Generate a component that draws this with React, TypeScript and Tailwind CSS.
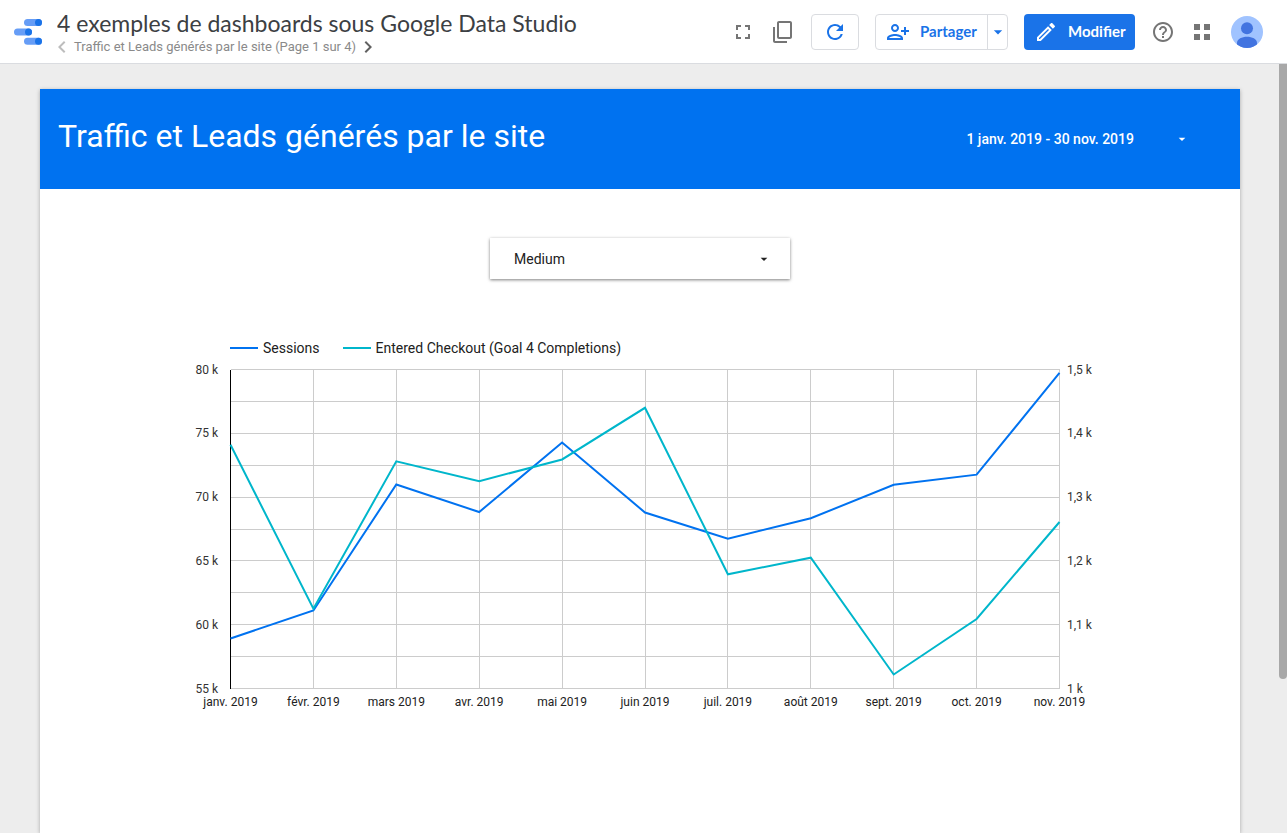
import {
  MdArrowDropDown,
  MdChevronLeft,
  MdChevronRight,
  MdContentCopy,
  MdFullscreen,
  MdHelpOutline,
  MdOutlineEdit,
  MdOutlinePersonAddAlt1,
  MdRefresh,
} from 'react-icons/md';

const months = [
  { label: 'janv. 2019', sessions: 58.92, checkout: 1382 },
  { label: 'févr. 2019', sessions: 61.11, checkout: 1125 },
  { label: 'mars 2019', sessions: 70.99, checkout: 1356 },
  { label: 'avr. 2019', sessions: 68.83, checkout: 1325 },
  { label: 'mai 2019', sessions: 74.28, checkout: 1359 },
  { label: 'juin 2019', sessions: 68.79, checkout: 1440 },
  { label: 'juil. 2019', sessions: 66.74, checkout: 1179 },
  { label: 'août 2019', sessions: 68.34, checkout: 1205 },
  { label: 'sept. 2019', sessions: 70.97, checkout: 1022 },
  { label: 'oct. 2019', sessions: 71.76, checkout: 1109 },
  { label: 'nov. 2019', sessions: 79.73, checkout: 1261 },
];

const leftTicks = ['80 k', '75 k', '70 k', '65 k', '60 k', '55 k'];
const rightTicks = ['1,5 k', '1,4 k', '1,3 k', '1,2 k', '1,1 k', '1 k'];

const series = [
  { name: 'Sessions', swatch: 'bg-[#0072f0]' },
  { name: 'Entered Checkout (Goal 4 Completions)', swatch: 'bg-[#00b6cb]' },
];

// Plot area inside the chart's viewBox
const plot = { left: 50.5, top: 9.5, width: 829, height: 319 };

const xAt = (i: number) => plot.left + (plot.width / (months.length - 1)) * i;
const yAt = (ratio: number) => plot.top + plot.height * (1 - ratio);

function Logo() {
  return (
    <svg width="28" height="26" viewBox="0 0 28 26" className="shrink-0" aria-hidden="true">
      <g fill="#669df6">
        <rect x="10" y="0" width="18" height="7" rx="3.5" />
        <rect x="0" y="9.4" width="18" height="7" rx="3.5" />
        <rect x="10" y="18.8" width="18" height="7" rx="3.5" />
      </g>
      <g fill="#1a73e8">
        <circle cx="24.5" cy="3.5" r="3.5" />
        <circle cx="14.5" cy="12.9" r="3.5" />
        <circle cx="24.5" cy="22.3" r="3.5" />
      </g>
    </svg>
  );
}

function Avatar() {
  return (
    <svg width="32" height="32" viewBox="0 0 32 32" aria-hidden="true">
      <clipPath id="avatar-clip">
        <circle cx="16" cy="16" r="16" />
      </clipPath>
      <g clipPath="url(#avatar-clip)">
        <rect width="32" height="32" fill="#a0c3ff" />
        <circle cx="16" cy="12.3" r="6" fill="#4274e0" />
        <path d="M6 32v-5c0-4 5-6.2 10-6.2s10 2.2 10 6.2v5z" fill="#4274e0" />
      </g>
    </svg>
  );
}

function Header() {
  return (
    <header className="flex h-16 shrink-0 items-center border-b border-[#dadce0] bg-white pl-[14px] pr-6">
      <Logo />
      <div className="ml-[15px] min-w-0 flex-1 pt-0.5">
        <h1 className="truncate font-['Lato',sans-serif] text-[23px] leading-7 text-[#3c4043]">
          4 exemples de dashboards sous Google Data Studio
        </h1>
        <nav className="-ml-[7px] flex h-5 items-center text-[13px] text-[#8a8a8a]">
          <button aria-label="Page précédente" className="text-[#bdbdbd]">
            <MdChevronLeft size={24} />
          </button>
          <span className="whitespace-nowrap">Traffic et Leads générés par le site (Page 1 sur 4)</span>
          <button aria-label="Page suivante" className="text-[#616161]">
            <MdChevronRight size={24} />
          </button>
        </nav>
      </div>

      <div className="flex shrink-0 items-center text-[#757575]">
        <button aria-label="Plein écran">
          <MdFullscreen size={24} />
        </button>
        <button aria-label="Copier le rapport" className="ml-4">
          <MdContentCopy size={24} className="-scale-y-100" />
        </button>
        <button
          aria-label="Actualiser"
          className="ml-4 flex h-9 w-12 items-center justify-center rounded border border-[#dadce0] text-[#1a73e8]"
        >
          <MdRefresh size={24} />
        </button>
        <div className="ml-4 flex h-9 rounded border border-[#dadce0] font-['Lato',sans-serif] text-[15px] font-bold text-[#1a73e8]">
          <button className="flex w-[111px] items-center gap-2.5 pl-2.5">
            <MdOutlinePersonAddAlt1 size={24} />
            Partager
          </button>
          <button
            aria-label="Autres options de partage"
            className="flex w-5 items-center justify-center border-l border-[#dadce0]"
          >
            <MdArrowDropDown size={20} className="shrink-0" />
          </button>
        </div>
        <button className="ml-4 flex h-9 w-[111px] items-center gap-2.5 rounded bg-[#1a73e8] pl-2.5 font-['Lato',sans-serif] text-[15px] font-bold text-white">
          <MdOutlineEdit size={24} />
          Modifier
        </button>
        <button aria-label="Aide" className="ml-4">
          <MdHelpOutline size={24} />
        </button>
        <button aria-label="Applications" className="ml-[19px]">
          <svg width="16" height="16" viewBox="0 0 16 16" fill="currentColor">
            <path d="M0 0h6v6H0zM10 0h6v6h-6zM0 10h6v6H0zM10 10h6v6h-6z" />
          </svg>
        </button>
        <button aria-label="Compte" className="ml-[21px]">
          <Avatar />
        </button>
      </div>
    </header>
  );
}

function TrafficChart() {
  const sessions = months.map((m, i) => `${xAt(i)},${yAt((m.sessions - 55) / 25)}`).join(' ');
  const checkout = months.map((m, i) => `${xAt(i)},${yAt((m.checkout - 1000) / 500)}`).join(' ');

  return (
    <figure className="mx-auto w-[920px] max-w-full">
      <figcaption className="flex h-6 items-center gap-[23px] pl-[50px] text-sm text-[#212121]">
        {series.map((s) => (
          <span key={s.name} className="flex items-center gap-[5px]">
            <span className={`h-0.5 w-7 ${s.swatch}`} />
            {s.name}
          </span>
        ))}
      </figcaption>
      <svg viewBox="0 0 920 352" className="block w-full text-xs" role="img" aria-label="Sessions et Entered Checkout par mois">
        <g stroke="#cccccc" shapeRendering="crispEdges">
          {Array.from({ length: 11 }, (_, i) => (
            <line key={i} x1={plot.left} x2={plot.left + plot.width} y1={yAt(i / 10)} y2={yAt(i / 10)} />
          ))}
          {months.map((m, i) => (
            <line key={m.label} x1={xAt(i)} x2={xAt(i)} y1={plot.top} y2={plot.top + plot.height} />
          ))}
        </g>
        <line
          x1={plot.left}
          x2={plot.left}
          y1={plot.top}
          y2={plot.top + plot.height}
          stroke="#000000"
          shapeRendering="crispEdges"
        />
        <polyline points={sessions} fill="none" stroke="#0072f0" strokeWidth="2" />
        <polyline points={checkout} fill="none" stroke="#00b6cb" strokeWidth="2" />
        <g fill="#333333" textAnchor="end">
          {leftTicks.map((t, i) => (
            <text key={t} x="38" y={yAt(1 - i / 5) + 4}>{t}</text>
          ))}
        </g>
        <g fill="#333333">
          {rightTicks.map((t, i) => (
            <text key={t} x="887" y={yAt(1 - i / 5) + 4}>{t}</text>
          ))}
        </g>
        <g fill="#212121" textAnchor="middle">
          {months.map((m, i) => (
            <text key={m.label} x={xAt(i)} y="346">{m.label}</text>
          ))}
        </g>
      </svg>
    </figure>
  );
}

export default function App() {
  return (
    <div className="flex h-screen flex-col overflow-hidden bg-[#ededed] font-['Roboto',sans-serif]">
      <Header />
      <div className="flex min-h-0 flex-1">
        <main className="flex min-w-0 flex-1 flex-col pl-10 pr-[39px] pt-[25px]">
          <article className="flex-1 bg-white shadow-[0_1px_4px_rgba(0,0,0,0.3)]">
            <div className="flex h-[100px] items-center justify-between bg-[#0072f0] pl-[18px] pr-[50px] text-white">
              <h2 className="pb-1.5 text-[32px]">Traffic et Leads générés par le site</h2>
              <button className="flex items-center gap-10 text-sm font-medium">
                1 janv. 2019 - 30 nov. 2019
                <MdArrowDropDown size={16} />
              </button>
            </div>

            <div className="relative mx-auto mt-[49px] w-[300px] shadow-[0_1px_3px_rgba(0,0,0,0.5)]">
              <select
                aria-label="Medium"
                className="h-[41px] w-full appearance-none bg-white px-6 text-sm text-[#212121] outline-none"
              >
                <option>Medium</option>
              </select>
              <MdArrowDropDown
                size={16}
                className="pointer-events-none absolute right-[18px] top-[13px] text-[#212121]"
              />
            </div>

            <div className="mt-[57px]">
              <TrafficChart />
            </div>
          </article>
        </main>
        <div className="w-2 shrink-0" aria-hidden="true">
          <div className="h-4/5 rounded-b bg-[#a8a8a8]" />
        </div>
      </div>
    </div>
  );
}
